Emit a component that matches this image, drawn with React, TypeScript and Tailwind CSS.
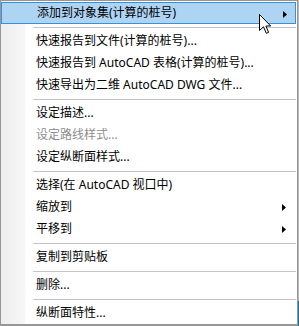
import { Fragment } from "react";

type Entry =
  | { kind: "item"; label: string; sub?: boolean; disabled?: boolean; active?: boolean }
  | { kind: "sep" };

const entries: Entry[] = [
  { kind: "item", label: "添加到对象集(计算的桩号)", sub: true, active: true },
  { kind: "sep" },
  { kind: "item", label: "快速报告到文件(计算的桩号)..." },
  { kind: "item", label: "快速报告到 AutoCAD 表格(计算的桩号)..." },
  { kind: "item", label: "快速导出为二维 AutoCAD DWG 文件..." },
  { kind: "sep" },
  { kind: "item", label: "设定描述..." },
  { kind: "item", label: "设定路线样式...", disabled: true },
  { kind: "item", label: "设定纵断面样式..." },
  { kind: "sep" },
  { kind: "item", label: "选择(在 AutoCAD 视口中)" },
  { kind: "item", label: "缩放到", sub: true },
  { kind: "item", label: "平移到", sub: true },
  { kind: "sep" },
  { kind: "item", label: "复制到剪贴板" },
  { kind: "sep" },
  { kind: "item", label: "删除..." },
  { kind: "sep" },
  { kind: "item", label: "纵断面特性..." },
];

const SubArrow = () => (
  <svg width="4" height="7" viewBox="0 0 4 7" className="absolute left-[281px] top-[8px]">
    <polygon points="0,0 4,3.5 0,7" fill="#000" />
  </svg>
);

const Cursor = () => (
  <svg
    width="13"
    height="21"
    viewBox="0 0 13 21"
    className="absolute left-[258px] top-[13px] pointer-events-none"
  >
    <path
      d="M0.5 0.5 L0.5 16.5 L4.5 12.8 L7.3 19.3 L9.6 18.3 L6.9 12 L11.8 12 Z"
      fill="#fff"
      stroke="#000"
      strokeWidth="1"
      strokeLinejoin="miter"
    />
  </svg>
);

export default function App() {
  return (
    <div
      className="flex w-[299px] h-[326px] overflow-hidden text-[12px] leading-none text-black"
      style={{ fontFamily: '"Noto Sans", "Noto Sans CJK SC", sans-serif' }}
    >
      <div className="relative w-[298px] h-[326px] border border-b-2 border-[#979797] pt-[1px] pr-[1px] bg-[linear-gradient(to_right,#ededed_0px,#f7f7f7_24px,#ffffff_24px)]">
        {entries.map((e, i) =>
          e.kind === "sep" ? (
            <div key={i} className="h-[6px] flex items-center pl-[32px]">
              <div className="h-px w-full bg-[#c5c5c5]" />
            </div>
          ) : (
            <Fragment key={i}>
              <div
                className={`relative h-[22px] flex items-center pl-[35px] whitespace-nowrap ${
                  e.active ? "bg-[#aed4f4] border border-[#3b8ed8] pl-[34px]" : ""
                } ${e.disabled ? "text-[#8d8d8d]" : "text-black"}`}
              >
                <span>{e.label}</span>
                {e.sub && <SubArrow />}
              </div>
            </Fragment>
          )
        )}
        <Cursor />
      </div>
      <div className="flex flex-col w-px h-full">
        <div className="h-[301px] bg-[#b8b8b8]" />
        <div className="flex-1 bg-[#1f6f8f]" />
      </div>
    </div>
  );
}
